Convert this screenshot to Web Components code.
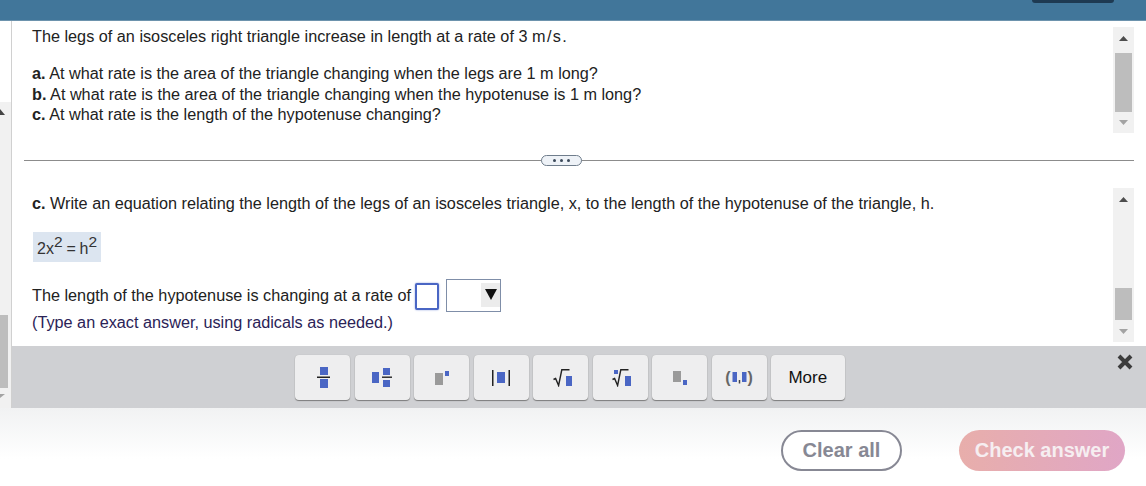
<!DOCTYPE html>
<html><head><meta charset="utf-8">
<style>
html,body{margin:0;padding:0;background:#fff}
body{width:1146px;height:486px;overflow:hidden;font-family:"Liberation Sans",Arial,sans-serif;color:#1f1f1f}
</style></head><body>
<hw-app></hw-app>
<script>
function def(name, html){
  customElements.define(name, class extends HTMLElement{
    constructor(){super();this.attachShadow({mode:'open'}).innerHTML=html;}
  });
}
const B='#4a66c4',G='#9a9a9a',K='#222';
def('hw-scrollbar',`<style>
:host{display:flex;flex-direction:column;width:21px;background:#f1f1f1;align-items:center;height:var(--h);flex:none}
.a{height:var(--atop);flex:none;display:flex;align-items:center;justify-content:center}
.t{background:#bdbdbd;width:17px;flex:none;height:var(--th);margin-top:var(--off,0)}
.s{flex:1}
.b{height:var(--abot);flex:none;display:flex;align-items:center;justify-content:center}
</style>
<div class="a"><svg width="9" height="5"><path d="M4.5 0 9 5H0z" fill="#4d4d4d"/></svg></div>
<div class="t"></div><div class="s"></div>
<div class="b"><svg width="9" height="5"><path d="M0 0H9L4.5 5z" fill="#a3a3a3"/></svg></div>`);

def('hw-top-panel',`<style>
:host{display:flex;height:134px;padding-left:20px;box-sizing:border-box;flex:none}
.c{flex:1;font-size:16.24px;line-height:20.5px;color:#222;padding-top:5px}
p{margin:0 0 16.5px}
b{font-weight:700}
.u{letter-spacing:1.4px}
hw-scrollbar{--h:106px;--atop:22px;--off:4px;--th:59px;--abot:21px;margin-top:6px;margin-right:12px}
</style>
<div class="c"><p>The legs of an isosceles right triangle increase in length at a rate of 3 <span class="u">m/s</span>.</p>
<div><b>a.</b> At what rate is the area of the triangle changing when the legs are 1 m long?</div>
<div><b>b.</b> At what rate is the area of the triangle changing when the hypotenuse is 1 m long?</div>
<div><b>c.</b> At what rate is the length of the hypotenuse changing?</div></div>
<hw-scrollbar></hw-scrollbar>`);

def('hw-divider',`<style>
:host{display:flex;align-items:center;height:11px;margin:0 12px 0 12px;position:relative;flex:none}
:host::before{content:"";position:absolute;left:0;right:0;top:5px;height:1px;background:#8c8c8c}
.h{position:relative;margin-left:517px;width:41px;height:11px;box-sizing:border-box;border:1px solid #6f7d8c;border-radius:6px;background:#eef2f7;display:flex;align-items:center;justify-content:center;gap:4px}
i{width:3px;height:3px;border-radius:50%;background:#3c4a5a}
</style><div class="h"><i></i><i></i><i></i></div>`);

def('hw-bottom-panel',`<style>
:host{display:flex;flex:1;padding-left:20px;min-height:0}
.c{flex:1;font-size:16.24px;color:#222;padding-top:27px}
.l{line-height:21px}
b{font-weight:700}
.eq{display:flex;align-items:center;height:30px;width:68px;box-sizing:border-box;padding:3px 0 0 4px;background:#dce5f0;margin-top:18px;margin-left:1px;font-size:16px;word-spacing:-0.6px;color:#333}
sup{font-size:15.5px;line-height:0;position:relative;top:0;vertical-align:super}
.r{display:flex;align-items:center;margin-top:16px;height:34px}
.in{width:24px;height:27px;box-sizing:border-box;margin-left:4px;margin-top:2px;border:2px solid #4a66c4;border-radius:2px;background:#fff;box-shadow:0 0 2px #8ea0dd}
.sel{width:55px;height:33px;box-sizing:border-box;margin-left:7px;border:1px solid #7f8ea8;background:#fff;display:flex;justify-content:flex-end;padding:3px 0 0 0}
.btn{width:19px;height:24px;background:#ececec;display:flex;align-items:center;justify-content:center;box-sizing:border-box}
.n{color:#2b2357;margin-top:0;line-height:20px}
hw-scrollbar{--h:154px;--atop:22px;--th:32px;--off:78px;--abot:22px;margin-top:22px;margin-right:12px}
</style>
<div class="c"><div class="l"><b>c.</b> Write an equation relating the length of the legs of an isosceles triangle, x, to the length of the hypotenuse of the triangle, h.</div>
<div class="eq"><span>2x<sup>2</sup> = h<sup>2</sup></span></div>
<div class="r"><span>The length of the hypotenuse is changing at a rate of</span><div class="in"></div>
<div class="sel"><div class="btn"><svg width="12" height="11"><path d="M0 0H12L6 11z" fill="#111"/></svg></div></div></div>
<div class="n">(Type an exact answer, using radicals as needed.)</div></div>
<hw-scrollbar></hw-scrollbar>`);

def('hw-key',`<style>
:host{display:flex;align-items:center;justify-content:center;width:55px;height:45px;box-sizing:border-box;background:#eeeeef;border-radius:4px;box-shadow:0 1px 1px #7c7c7c,0 0 1px #b0b0b0;font-size:17px;color:#111;flex:none}
</style><slot></slot>`);

const R=(x,y,w,h,c)=>`<rect x="${x}" y="${y}" width="${w}" height="${h}" fill="${c}"/>`;
const L=(x,y,w,h)=>R(x,y,w,h,K);
const sq=(w,h,b,ml=0)=>`<svg width="${w}" height="${h}" viewBox="0 0 ${w} ${h}" style="display:block;margin-left:${ml}px">${b}</svg>`;
const radical=`<path d="M0.5 10.5 2.6 9.5 5.6 16.5 8.8 0.8H16.5" fill="none" stroke="#222" stroke-width="1.4"/>`;

def('hw-toolbar',`<style>
:host{display:flex;height:62px;background:#cfd0d3;flex:none;box-sizing:border-box;padding:9px 0 0 283px;gap:4.5px;position:relative;align-items:flex-start}
.x{position:absolute;left:1104px;top:7px}
</style>
<hw-key>${sq(13,21,R(3,0,8,8,B)+L(0,9.5,13,1.5)+R(3,12,8,9,B),2)}</hw-key>
<hw-key>${sq(20,19,R(0,4,7,11,B)+R(11,0,7,7,B)+L(10,8.5,10,1.4)+R(11,12,7,7,B))}</hw-key>
<hw-key>${sq(14,14,R(0,2,8,12,G)+R(10,0,4,5,B))}</hw-key>
<hw-key>${sq(18,16,L(0,0,1.5,16)+R(5,2,8,11,B)+L(16.5,0,1.5,16))}</hw-key>
<hw-key>${sq(19,18,radical+R(13,7,6,10,B),3)}</hw-key>
<hw-key>${sq(19,18,R(2,1,4,4,B)+radical+R(13,7,6,10,B),2)}</hw-key>
<hw-key>${sq(14,14,R(0,0,8,11,G)+R(10,9,4,5,B))}</hw-key>
<hw-key><span style="color:#666;font-size:16px;display:flex;align-items:center;gap:1px;font-weight:700">(${sq(15,13,R(0.5,1,4.5,10,B)+`<path d="M7.5 9v3.5" stroke="#444" stroke-width="1.5"/>`+R(10,1,4.5,10,B))})</span></hw-key>
<hw-key style="width:73.5px">More</hw-key>
<svg class="x" width="18" height="18" viewBox="0 0 18 18"><path d="M3 3 15 15M15 3 3 15" stroke="#3c3c3c" stroke-width="4"/></svg>`);

def('hw-footer',`<style>
:host{display:flex;height:78px;flex:none;background:linear-gradient(#f1f2f3,#fff 65%);align-items:flex-start;padding:22px 21px 0 0;box-sizing:border-box;justify-content:flex-end;gap:57px}
.b{height:41px;border-radius:21px;box-sizing:border-box;display:flex;align-items:center;justify-content:center;font-size:20px;font-weight:700}
.c{width:121px;border:2.5px solid #878894;color:#878894;background:#fff}
.k{width:166px;color:#f6eef1;background:linear-gradient(90deg,#e8aeab,#e0a6c6)}
</style><div class="b c">Clear all</div><div class="b k">Check answer</div>`);

def('hw-side',`<style>
:host{display:flex;flex-direction:column;width:12px;flex:none;box-sizing:border-box;border-right:1px solid #d0d0d0}
.w{height:81px;flex:none}
.g{flex:1;background:#f1f1f1;display:flex;flex-direction:column;align-items:flex-start}
.t{width:8px;flex:none;height:73px;margin-top:197px;background:#bdbdbd}
.d{margin-top:6px}
</style>
<div class="w"></div>
<div class="g"><svg width="5" height="10" style="margin-top:6px;flex:none"><path d="M0 1 5 7H0z" fill="#444"/></svg><div class="t"></div><svg class="d" width="5" height="4"><path d="M0 0H5L0 4z" fill="#a3a3a3"/></svg></div>`);

def('hw-app',`<style>
:host{display:flex;flex-direction:column;width:1146px;height:486px}
.hd{height:21px;background:#41769a;flex:none;display:flex;justify-content:flex-end;padding-right:32px;border-bottom:1px solid #6d93ad;box-sizing:border-box}
.pill{width:82px;height:3px;background:#1e3a52;border-radius:0 0 8px 8px}
.mid{display:flex;flex:1;min-height:0}
.main{flex:1;display:flex;flex-direction:column;min-width:0}
</style>
<div class="hd"><div class="pill"></div></div>
<div class="mid"><hw-side></hw-side>
<div class="main"><hw-top-panel></hw-top-panel><hw-divider></hw-divider><hw-bottom-panel></hw-bottom-panel><hw-toolbar></hw-toolbar></div></div>
<hw-footer></hw-footer>`);
</script>
</body></html>
